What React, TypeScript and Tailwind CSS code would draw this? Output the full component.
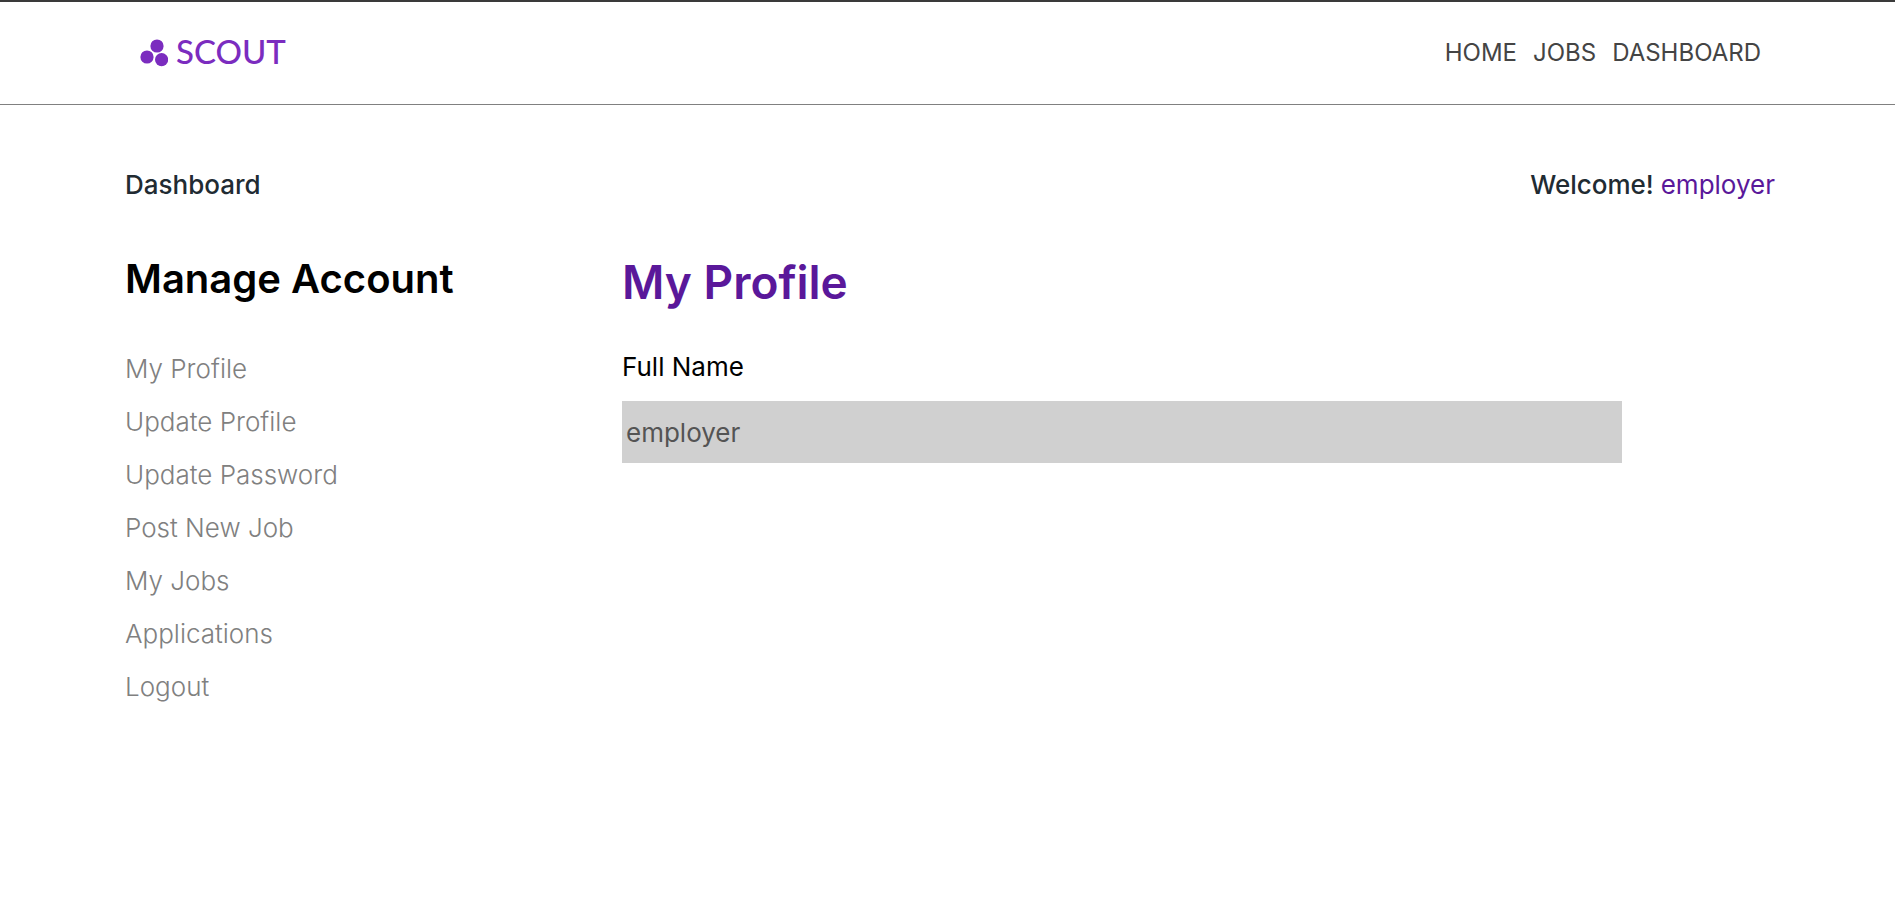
const navLinks = ["HOME", "JOBS", "DASHBOARD"];

const accountLinks = [
  "My Profile",
  "Update Profile",
  "Update Password",
  "Post New Job",
  "My Jobs",
  "Applications",
  "Logout",
];

function Logo() {
  return (
    <a href="#home" className="flex items-start gap-2 pb-1 text-[#7b2cbf]">
      <svg viewBox="0 0 28 28" className="mt-1 h-7 w-7" fill="currentColor" aria-hidden="true">
        <circle cx="17" cy="7" r="6.6" />
        <circle cx="7" cy="18" r="6.6" />
        <circle cx="21.6" cy="20.6" r="6.6" />
      </svg>
      <span className="font-[Lato,sans-serif] text-[33px] leading-8 font-medium">SCOUT</span>
    </a>
  );
}

export default function App() {
  return (
    <div className="min-h-screen bg-white font-[Inter,sans-serif] text-[26px] leading-9 text-black">
      <header className="border-t-2 border-b border-t-[#3a3a3a] border-b-[#808080]">
        <div className="flex h-[102px] items-center justify-between pr-[134px] pl-[140px]">
          <Logo />
          <nav className="flex gap-4 text-2xl leading-9 text-[#444444]">
            {navLinks.map((label) => (
              <a key={label} href={`#${label.toLowerCase()}`}>
                {label}
              </a>
            ))}
          </nav>
        </div>
      </header>

      <main className="pt-[62px] pr-[120px] pl-[125px]">
        <div className="flex items-center justify-between font-medium text-[#212b32]">
          <p>Dashboard</p>
          <p>
            Welcome! <span className="font-normal text-[#5a189a]">employer</span>
          </p>
        </div>

        <div className="mt-11 grid grid-cols-[497px_1fr] pr-[153px]">
          <aside>
            <h2 className="text-[40px] leading-[64px] font-semibold">Manage Account</h2>
            <ul className="mt-10 flex flex-col gap-[17px] font-light text-[#808080]">
              {accountLinks.map((label) => (
                <li key={label}>
                  <a href="#account">{label}</a>
                </li>
              ))}
            </ul>
          </aside>

          <section>
            <h1 className="text-[46px] leading-[70px] font-semibold text-[#5a189a]">My Profile</h1>
            <label htmlFor="full-name" className="mt-8 block">
              Full Name
            </label>
            <input
              id="full-name"
              type="text"
              value="employer"
              disabled
              className="mt-4 block h-[62px] w-full bg-[#d0d0d0] px-1 text-[#545454]"
            />
          </section>
        </div>
      </main>
    </div>
  );
}
